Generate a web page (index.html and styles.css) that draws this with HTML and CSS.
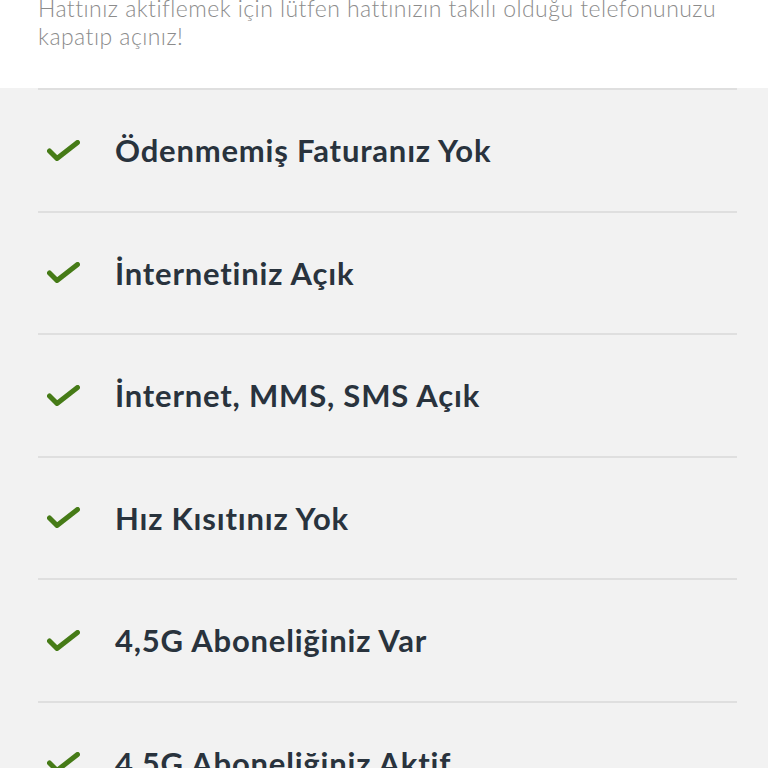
FILE: index.html
```html
<!DOCTYPE html>
<html lang="tr">

<head>
    <meta charset="UTF-8">
    <meta name="viewport" content="width=device-width, initial-scale=1.0">
    <title>Hat Durumu</title>
    <link rel="stylesheet" href="styles.css">
</head>

<body>
    <section class="intro">
        <p>Hattınız aktiflemek için lütfen hattınızın takılı olduğu telefonunuzu kapatıp açınız!</p>
    </section>

    <section class="checks">
        <ul class="check-list">
            <li class="check-item">
                <svg class="check-icon" viewBox="0 0 33 21"><polyline points="2.5,11 10,18.5 30.5,2.5" /></svg>
                <span>Ödenmemiş Faturanız Yok</span>
            </li>
            <li class="check-item">
                <svg class="check-icon" viewBox="0 0 33 21"><polyline points="2.5,11 10,18.5 30.5,2.5" /></svg>
                <span>İnternetiniz Açık</span>
            </li>
            <li class="check-item">
                <svg class="check-icon" viewBox="0 0 33 21"><polyline points="2.5,11 10,18.5 30.5,2.5" /></svg>
                <span>İnternet, MMS, SMS Açık</span>
            </li>
            <li class="check-item">
                <svg class="check-icon" viewBox="0 0 33 21"><polyline points="2.5,11 10,18.5 30.5,2.5" /></svg>
                <span>Hız Kısıtınız Yok</span>
            </li>
            <li class="check-item">
                <svg class="check-icon" viewBox="0 0 33 21"><polyline points="2.5,11 10,18.5 30.5,2.5" /></svg>
                <span>4,5G Aboneliğiniz Var</span>
            </li>
            <li class="check-item">
                <svg class="check-icon" viewBox="0 0 33 21"><polyline points="2.5,11 10,18.5 30.5,2.5" /></svg>
                <span>4,5G Aboneliğiniz Aktif</span>
            </li>
        </ul>
    </section>
</body>

</html>
```

FILE: styles.css
```css
body {
    font-family: Lato, "Open Sans", sans-serif;
    background-color: #f2f2f2;
    margin: 0;
    padding: 0;
    overflow: hidden;
}

.intro {
    background-color: #fff;
    height: 88px;
    padding: 0 38px;
    overflow: hidden;
}

.intro p {
    margin: -6px 0 0;
    font-size: 23px;
    line-height: 28px;
    font-weight: 300;
    letter-spacing: 0.45px;
    color: #8c8c8c;
}

.check-list {
    list-style: none;
    margin: 0 31px 0 38px;
    padding: 0;
}

.check-item {
    display: flex;
    align-items: center;
    height: 120.5px;
    border-top: 2px solid #dfdfdf;
    font-size: 31px;
    font-weight: bold;
    letter-spacing: 0.8px;
    color: #29333d;
}

.check-icon {
    flex-shrink: 0;
    width: 33px;
    height: 21px;
    margin: 0 35px 0 9px;
    fill: none;
    stroke: #467b17;
    stroke-width: 5;
    stroke-linecap: round;
    stroke-linejoin: round;
}
```
